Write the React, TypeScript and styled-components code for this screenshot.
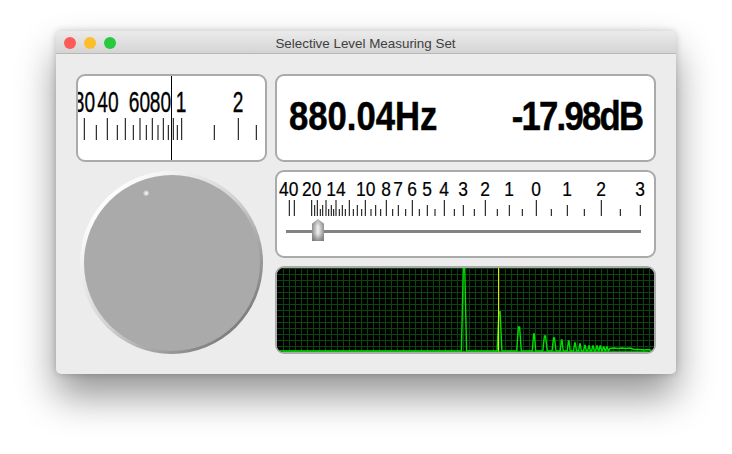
import React from "react";
import styled, { createGlobalStyle } from "styled-components";

const GlobalStyle = createGlobalStyle`
  html, body {
    margin: 0;
    padding: 0;
    background: #fff;
    overflow: hidden;
  }
`;

const Page = styled.div`
  width: 732px;
  height: 454px;
  box-sizing: border-box;
  padding: 31px 56px 0;
  font-family: "Liberation Sans", Arial, sans-serif;
`;

const Window = styled.div`
  width: 620px;
  height: 343px;
  border-radius: 5px;
  background: #ececec;
  overflow: hidden;
  box-shadow: 0 22px 38px rgba(0, 0, 0, 0.42), 0 0 7px rgba(0, 0, 0, 0.2);
`;

const TitleBar = styled.div`
  height: 22px;
  position: relative;
  display: flex;
  align-items: center;
  justify-content: center;
  background: linear-gradient(#ebebeb, #d4d4d4);
  border-bottom: 1px solid #b8b8b8;
`;

const Lights = styled.div`
  position: absolute;
  left: 8px;
  top: 6px;
  display: flex;
  gap: 8px;
`;

const Light = styled.span<{ $color: string }>`
  width: 12px;
  height: 12px;
  border-radius: 50%;
  background: ${(p) => p.$color};
`;

const Title = styled.div`
  font-size: 13.4px;
  color: #404040;
  padding-top: 3px;
  margin-left: -1px;
`;

const Body = styled.div`
  display: grid;
  grid-template-columns: 191px 381px;
  grid-template-rows: 88px 88px 88px;
  gap: 8px;
  padding: 20px 0 0 20px;
`;

const Panel = styled.div`
  position: relative;
  box-sizing: border-box;
  border: 2px solid #aaaaaa;
  border-radius: 9px;
  background: #fff;
  overflow: hidden;
`;

const ScopePanel = styled(Panel)`
  background: #000;
`;

const ScaleSvg = styled.svg`
  display: block;
`;

const Readout = styled(Panel)`
  display: flex;
  justify-content: space-between;
  padding: 16px 12px 0 12px;
`;

const Value = styled.span<{ $origin: string; $tight: number }>`
  display: block;
  font-size: 41.5px;
  line-height: 47px;
  height: 47px;
  font-weight: 700;
  color: #000;
  letter-spacing: ${(p) => p.$tight}px;
  -webkit-text-stroke: 0.5px #000;
  transform: scaleX(0.835);
  transform-origin: ${(p) => p.$origin} center;
  white-space: nowrap;
`;

const Knob = styled.div`
  grid-row: 2 / 4;
  width: 183px;
  height: 183px;
  margin: 1px 0 0 4px;
  position: relative;
  border-radius: 50%;
  background: linear-gradient(135deg, #ffffff 14%, #d2d2d2 50%, #7c7c7c 86%);
`;

const KnobFace = styled.div`
  position: absolute;
  left: 3.5px;
  top: 3.5px;
  width: 176px;
  height: 176px;
  border-radius: 50%;
  background: #aaaaaa;
`;

const KnobDot = styled.div`
  position: absolute;
  left: 59px;
  top: 15px;
  width: 6px;
  height: 6px;
  border-radius: 50%;
  background: radial-gradient(circle at 55% 55%, #f0f0f0 15%, #949494 100%);
`;

const Track = styled.div`
  position: relative;
  height: 3px;
  margin: 12px 13px 0 9px;
  background: #838383;
`;

const Thumb = styled.div<{ $left: number }>`
  position: absolute;
  left: ${(p) => p.$left}px;
  top: -11px;
  width: 12px;
  height: 22px;
  background: linear-gradient(90deg, #8c8c8c 0%, #f2f2f2 50%, #8f8f8f 100%);
  clip-path: polygon(50% 0, 100% 22%, 100% 100%, 0 100%, 0 22%);

  &::after {
    content: "";
    position: absolute;
    left: 0;
    right: 0;
    top: 0;
    bottom: 0;
    background: linear-gradient(rgba(120, 120, 120, 0.55) 0%, rgba(255, 255, 255, 0) 35%, rgba(255, 255, 255, 0) 65%, rgba(110, 110, 110, 0.75) 100%);
  }
`;

const ScopeSvg = styled.svg`
  display: block;
`;

// x, top of tick
const dialTicks: [number, number][] = [
  [84.3, 118], [96.3, 125], [107.3, 118], [117.3, 125], [125.3, 118], [133.3, 125],
  [140, 118], [146.3, 125], [152.3, 118], [158, 125], [163.3, 118], [168.3, 125],
  [173.3, 118], [177.3, 125], [181.7, 118], [214.3, 125], [238.3, 118], [256.3, 125],
];

const dialLabels: [string, number][] = [
  ["30", 84.5], ["40", 108], ["60", 139.5], ["80", 160.5], ["1", 181], ["2", 238],
];

const sliderTicks: [number, number][] = [
  [289.3, 200], [294.3, 200], [311.7, 200], [314.7, 205], [317.3, 200], [320.3, 209], [322.7, 205],
  [326, 200], [328.7, 209], [331.3, 205], [333.7, 209], [336, 200], [339.3, 209], [342.3, 205],
  [345.3, 209], [349.3, 200], [353.3, 209], [357.3, 205], [361.7, 209], [365.3, 200],
  [371, 209], [375.7, 205], [380.7, 209], [386.3, 200], [392.7, 209], [398.3, 205],
  [405.7, 209], [412.3, 200], [419.3, 209], [427.3, 205], [435, 209], [444.3, 200],
  [454.3, 209], [463.3, 205], [474.3, 209], [485.3, 200], [497.3, 209], [509.3, 205],
  [522.3, 209], [536.3, 200], [551.3, 209], [567.3, 205], [584.3, 209], [601.3, 200],
  [620.3, 209], [640.3, 205],
];

const sliderLabels: [string, number][] = [
  ["40", 288.7], ["20", 311.7], ["14", 336], ["10", 365.7], ["8", 386], ["7", 398], ["6", 412],
  ["5", 427], ["4", 444], ["3", 463], ["2", 485], ["1", 509], ["0", 536], ["1", 567], ["2", 601], ["3", 640],
];

// harmonics of the spectrum: centre, top, half width
const peaks: [number, number, number][] = [
  [464, 268, 1.8], [499.5, 311.7, 1.6], [519, 327, 1.5], [534, 334, 0.9], [545, 336, 1.4], [554, 338, 1.2],
  [561.7, 340, 0.7], [568.7, 341, 0.7], [575, 343, 0.7], [580, 344, 0.6], [585, 345.5, 0.6], [589, 346, 0.6],
  [593, 346, 0.6], [597, 346, 0.6], [600.3, 346, 0.6], [603.7, 347, 0.6], [607, 347, 0.6],
];

const spectrum = () => {
  let d = "M277 351";
  peaks.forEach(([x, top, w]) => {
    d += ` L${x - w - 0.8} 351 L${x - w * 0.4} ${top} L${x + w * 0.4} ${top} L${x + w + 0.8} 351`;
  });
  d += " L610 348.5 L614 348 L618 348.5 L622 348 L626 348.5 L630 348 L634 349.5 L640 349.5 L644 350 L648 349.5 L654 351";
  return d;
};

const gridX = Array.from({ length: 63 }, (_, i) => 283.5 + i * 6);
const gridY = Array.from({ length: 14 }, (_, i) => 268 + i * 6);

const App = () => {
  return (
    <Page>
      <GlobalStyle />
      <Window>
        <TitleBar>
          <Lights>
            <Light $color="#fc5b57" />
            <Light $color="#fdbd2c" />
            <Light $color="#28c83f" />
          </Lights>
          <Title>Selective Level Measuring Set</Title>
        </TitleBar>
        <Body>
          <Panel>
            <ScaleSvg width="187" height="84" viewBox="78 76 187 84">
              {dialLabels.map(([t, x]) => (
                <text
                  key={t}
                  transform={`translate(${x} 112.3) scale(0.66 1)`}
                  textAnchor="middle"
                  fontSize="29"
                  fontFamily="'Liberation Sans', Arial, sans-serif"
                  fill="#000"
                  stroke="#000"
                  strokeWidth="0.35"
                >
                  {t}
                </text>
              ))}
              {dialTicks.map(([x, top]) => (
                <line key={x} x1={x} x2={x} y1={top} y2={140} stroke="#000" strokeWidth="1" />
              ))}
              <line x1="171.5" x2="171.5" y1="76" y2="160" stroke="#000" strokeWidth="1" />
            </ScaleSvg>
          </Panel>
          <Readout>
            <Value $origin="left" $tight={0}>880.04Hz</Value>
            <Value $origin="right" $tight={-2.1}>-17.98dB</Value>
          </Readout>
          <Knob>
            <KnobFace>
              <KnobDot />
            </KnobFace>
          </Knob>
          <Panel>
            <ScaleSvg width="377" height="46" viewBox="277 172 377 46">
              {sliderLabels.map(([t, x]) => (
                <text
                  key={x}
                  transform={`translate(${x} 196) scale(0.87 1)`}
                  textAnchor="middle"
                  fontSize="20"
                  fontFamily="'Liberation Sans', Arial, sans-serif"
                  fill="#000"
                  stroke="#000"
                  strokeWidth="0.2"
                >
                  {t}
                </text>
              ))}
              {sliderTicks.map(([x, top]) => (
                <line key={x} x1={x} x2={x} y1={top} y2={216} stroke="#000" strokeWidth="1" />
              ))}
            </ScaleSvg>
            <Track>
              <Thumb $left={26} />
            </Track>
          </Panel>
          <ScopePanel>
            <ScopeSvg width="377" height="84" viewBox="277 268 377 84">
              <rect x="277" y="268" width="377" height="84" fill="#000" />
              {gridX.map((x) => (
                <line key={x} x1={x} x2={x} y1={268} y2={352} stroke="#0c4510" strokeWidth="1" />
              ))}
              {gridY.map((y) => (
                <line key={y} x1={277} x2={654} y1={y + 0.5} y2={y + 0.5} stroke="#0c4510" strokeWidth="1" />
              ))}
              <path d={spectrum()} fill="none" stroke="#00e000" strokeWidth="1.4" />
              <line x1="498.5" x2="498.5" y1="268" y2="352" stroke="#e6e600" strokeWidth="1" />
              <line x1="277" x2="654" y1="351.3" y2="351.3" stroke="#00c800" strokeWidth="1" />
            </ScopeSvg>
          </ScopePanel>
        </Body>
      </Window>
    </Page>
  );
};

export default App;
